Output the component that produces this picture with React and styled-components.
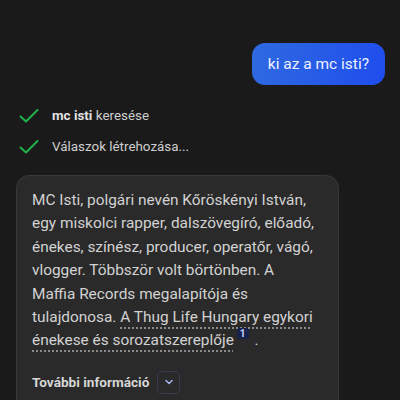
import React from "react";
import styled, { createGlobalStyle } from "styled-components";

const Global = createGlobalStyle`
  html, body { margin: 0; padding: 0; background: #1a1a1a; }
  body { font-family: Roboto, "Noto Sans", sans-serif; }
  * { box-sizing: border-box; }
`;

const Page = styled.div`
  width: 400px;
  height: 400px;
  overflow: hidden;
  background: #1a1a1a;
  display: flex;
  flex-direction: column;
  padding: 43px 15px 0 16px;
`;

const UserRow = styled.div`
  display: flex;
  justify-content: flex-end;
`;

const Bubble = styled.div`
  background: linear-gradient(100deg, #2f6ae0 0%, #1f4ded 100%);
  color: #eef2ff;
  font-size: 15.5px;
  line-height: 20px;
  padding: 11px 16px 11px 16px;
  border-radius: 13px;
`;

const Steps = styled.div`
  display: flex;
  flex-direction: column;
  gap: 11px;
  margin-top: 21px;
`;

const Step = styled.div`
  display: flex;
  align-items: center;
  gap: 13px;
  font-size: 13.4px;
  line-height: 20px;
  color: #cfcfcf;
  padding-left: 3px;
  b { font-weight: 700; color: #e2e2e2; }
`;

const Card = styled.div`
  margin-top: 18px;
  width: 323px;
  background: #2a2a2a;
  border: 1px solid #383838;
  border-radius: 13px;
  padding: 13px 21px 0 15px;
  flex: 1;
`;

const Answer = styled.p`
  margin: 0;
  font-size: 15.4px;
  line-height: 23.4px;
  color: #d2d2d2;
`;

const Cited = styled.span`
  text-decoration: underline dotted #8a8a8a;
  text-decoration-thickness: 1.5px;
  text-underline-offset: 5px;
`;

const Ref = styled.sup`
  display: inline-block;
  vertical-align: top;
  font-size: 10px;
  line-height: 11px;
  font-weight: 700;
  background: #17224d;
  color: #c9d4ff;
  border-radius: 3px;
  padding: 0 3px;
  margin: -1px 6px 0 3px;
`;

const MoreRow = styled.div`
  display: flex;
  align-items: center;
  gap: 8px;
  margin-top: 18px;
`;

const MoreLabel = styled.span`
  font-size: 13.6px;
  font-weight: 700;
  color: #d6d6d6;
`;

const ChevronButton = styled.button`
  width: 23px;
  height: 23px;
  border: 1px solid #3a3a52;
  border-radius: 5px;
  background: transparent;
  display: flex;
  align-items: center;
  justify-content: center;
  padding: 0;
`;

const NextBox = styled.div`
  margin-top: 8px;
  margin-left: 1px;
  width: 193px;
  height: 20px;
  background: #222222;
  border-radius: 6px 6px 0 0;
`;

const Check = () => (
  <svg width="20" height="16" viewBox="0 0 20 16" fill="none">
    <path d="M1.5 8.5 L7 13.5 L18.5 2" stroke="#22b24a" strokeWidth="2" strokeLinecap="round" strokeLinejoin="round" />
  </svg>
);

export default function App() {
  return (
    <>
      <Global />
      <Page>
        <UserRow>
          <Bubble>ki az a mc isti?</Bubble>
        </UserRow>
        <Steps>
          <Step>
            <Check />
            <span><b>mc isti</b> keresése</span>
          </Step>
          <Step>
            <Check />
            <span>Válaszok létrehozása...</span>
          </Step>
        </Steps>
        <Card>
          <Answer>
            MC Isti, polgári nevén Kőröskényi István, egy miskolci rapper, dalszövegíró, előadó, énekes, színész, producer, operatőr, vágó, vlogger. Többször volt börtönben. A Maffia Records megalapítója és tulajdonosa.{" "}
            <Cited>A Thug Life Hungary egykori énekese és sorozatszereplője</Cited>
            <Ref>1</Ref>.
          </Answer>
          <MoreRow>
            <MoreLabel>További információ</MoreLabel>
            <ChevronButton aria-label="Kibontás">
              <svg width="12" height="12" viewBox="0 0 12 12" fill="none">
                <path d="M3 4.5 L6 7.5 L9 4.5" stroke="#a9b4f0" strokeWidth="1.5" strokeLinecap="round" strokeLinejoin="round" />
              </svg>
            </ChevronButton>
          </MoreRow>
          <NextBox />
        </Card>
      </Page>
    </>
  );
}
